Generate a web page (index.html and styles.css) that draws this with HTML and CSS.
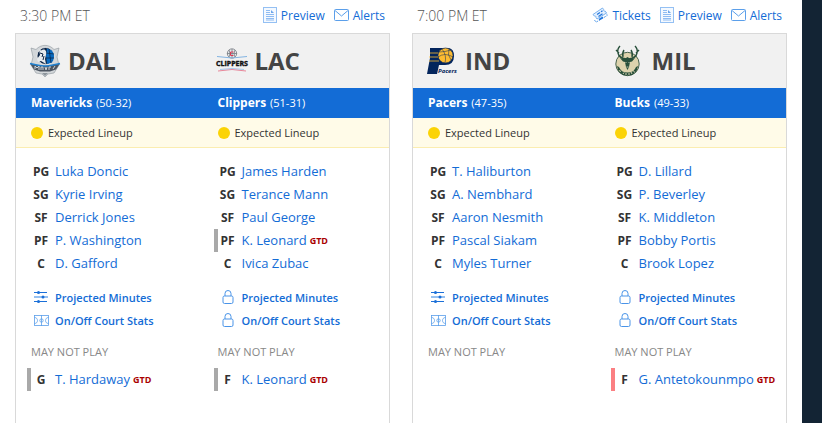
FILE: index.html
```html
<!DOCTYPE html>
<html lang="en">
<head>
    <meta charset="UTF-8">
    <meta name="viewport" content="width=device-width, initial-scale=1.0">
    <title>NBA Lineups</title>
    <link rel="stylesheet" href="styles.css">
</head>
<body>
    <!-- icon set -->
    <svg class="icon-set" aria-hidden="true">
        <symbol id="preview" viewBox="0 0 14 16">
            <rect x="0.5" y="0.5" width="13" height="15" fill="#f4f9ff" stroke="#94c0f3"/>
            <path d="M3 3.5h4M3 5.5h4M3 7.5h8M3 9.5h8M3 11.5h8M3 13h8" stroke="#8fbcf2"/>
            <path d="M8 3l3 3H8z" fill="#6ba6ec"/>
        </symbol>
        <symbol id="mail" viewBox="0 0 15 12">
            <rect x="0.5" y="0.5" width="14" height="11" rx="1" fill="none" stroke="#5b9fea"/>
            <path d="M1 1.5l6.5 5.5L14 1.5" fill="none" stroke="#5b9fea"/>
        </symbol>
        <symbol id="ticket" viewBox="0 0 16 16">
            <path d="M1 7.5L10.5 1l1.2 1.6c-.4 1 .5 1.8 1.5 1.5L14.5 6 5 12 4 10.5c.3-1.2-.8-1.8-1.6-1.4z" fill="#e6f1fe" stroke="#5b9fea" stroke-width="0.8"/>
            <path d="M2.5 13l1.5 2.2L15.2 8.5 14.5 6" fill="none" stroke="#5b9fea" stroke-dasharray="2 1"/>
            <path d="M5 7.5l3-2M9 4.7l1.5-1M6.5 9.5l4-2.7" stroke="#2378de" stroke-width="1.3"/>
            <path d="M7 12.7l4-2.5" stroke="#2378de" stroke-width="1.6"/>
        </symbol>
        <symbol id="sliders" viewBox="0 0 14 13">
            <path d="M0 1.5h13M0 10.5h13" stroke="#1a6fd8"/>
            <path d="M0 6h14" stroke="#7db1ee" stroke-width="1.6"/>
            <circle cx="4.5" cy="1.5" r="1.5" fill="#1a6fd8"/>
            <circle cx="9" cy="6" r="1.5" fill="#1a6fd8"/>
            <circle cx="4.5" cy="10.5" r="1.5" fill="#1a6fd8"/>
        </symbol>
        <symbol id="court" viewBox="0 0 15 11">
            <g fill="none" stroke="#5b9fea" stroke-width="0.8">
                <rect x="0.5" y="0.5" width="14" height="10"/>
                <path d="M7.5 0v11M0.5 2.5c4 0 4 6 0 6M14.5 2.5c-4 0-4 6 0 6"/>
                <circle cx="7.5" cy="5.5" r="1.7"/>
            </g>
        </symbol>
        <symbol id="lock" viewBox="0 0 12 14">
            <rect x="1" y="6" width="10" height="7.5" rx="1.5" fill="none" stroke="#4a94e8"/>
            <path d="M3 6V3.5a3 3 0 0 1 6 0V6" fill="none" stroke="#4a94e8"/>
        </symbol>
    </svg>

    <main class="lineups">
        <section class="game">
            <div class="game-top">
                <span class="game-time">3:30 PM ET</span>
                <nav class="game-links">
                    <a href="#"><svg class="i-preview"><use href="#preview"/></svg>Preview</a>
                    <a href="#"><svg class="i-mail"><use href="#mail"/></svg>Alerts</a>
                </nav>
            </div>
            <div class="card">
                <div class="teams">
                    <h2>
                        <svg class="logo" viewBox="0 0 30 32">
                            <path d="M1 3l5 1.5C11-1 19-1 24 4.5L29 3l-2 9 2 8-5 8-6 1-3 3-3-3-6-1-5-8 2-8z" fill="#d3d7da" stroke="#8c949b" stroke-width="0.6"/>
                            <circle cx="15.5" cy="11" r="8.5" fill="#0b2344" stroke="#f1f1f1" stroke-width="0.8"/>
                            <path d="M17 3.5c7 1 9 8 5 14l-5 1.5-1-8z" fill="#0a6bc0"/>
                            <path d="M16 8l8 1M16 13h8M19 4l2 14" stroke="#0b2344" stroke-width="0.7"/>
                            <path d="M9 4l2 1.5C15 3 17 6 16 10l-1 4 1 5-5-3-3 1-1-3 3-4z" fill="#e7ebee"/>
                            <path d="M10 8l3 1-1 3M13 15l1-4" fill="none" stroke="#0b2344"/>
                            <path d="M0 18.5l7 1.5q8 2 16 0l7-1.5-4 6-6 2H10l-6-2z" fill="#4c5561"/>
                            <path d="M0 18.5l7 1.5q8 2 16 0l7-1.5" fill="none" stroke="#2181cf" stroke-width="1.5"/>
                            <path d="M5 24v-3l2 2 2-2v4M11 25v-3h2v3M15 22l1 3 1-3M19 25v-3h2M23 24l2-3" fill="none" stroke="#cbd2d8"/>
                            <path d="M12 28l3 3 3-3" fill="#8c949b"/>
                        </svg>
                        DAL
                    </h2>
                    <h2>
                        <svg class="logo" viewBox="0 0 30 32">
                            <g fill="none" stroke="#767b82" stroke-width="0.8">
                                <circle cx="15" cy="8.5" r="4.7" fill="#e6e8eb"/>
                                <path d="M10 8.5h10M15 4v9M12 5q2 3.5 0 7M18 5q-2 3.5 0 7"/>
                            </g>
                            <path d="M16.5 7h-3v3.5h3" fill="none" stroke="#d83a55"/>
                            <path d="M0 11.5q15 3 30 0" fill="none" stroke="#83b4e2"/>
                            <text x="15" y="21" text-anchor="middle" class="clippers">CLIPPERS</text>
                            <path d="M1 26q14-3 28 0" fill="none" stroke="#e8879a"/>
                            <path d="M3 24.5q12-2 24 0" fill="none" stroke="#83b4e2" stroke-width="0.7"/>
                        </svg>
                        LAC
                    </h2>
                </div>
                <div class="names">
                    <div><b>Mavericks</b> (50-32)</div>
                    <div><b>Clippers</b> (51-31)</div>
                </div>
                <div class="status">
                    <div>Expected Lineup</div>
                    <div>Expected Lineup</div>
                </div>
                <div class="rosters">
                    <div class="roster">
                        <ul>
                            <li><b>PG</b><a href="#">Luka Doncic</a></li>
                            <li><b>SG</b><a href="#">Kyrie Irving</a></li>
                            <li><b>SF</b><a href="#">Derrick Jones</a></li>
                            <li><b>PF</b><a href="#">P. Washington</a></li>
                            <li><b>C</b><a href="#">D. Gafford</a></li>
                        </ul>
                        <ul class="tools">
                            <li><span><svg class="i-sliders"><use href="#sliders"/></svg></span><a href="#">Projected Minutes</a></li>
                            <li><span><svg class="i-court"><use href="#court"/></svg></span><a href="#">On/Off Court Stats</a></li>
                        </ul>
                        <h3>MAY NOT PLAY</h3>
                        <ul>
                            <li class="maybe"><b>G</b><a href="#">T. Hardaway</a><em>GTD</em></li>
                        </ul>
                    </div>
                    <div class="roster">
                        <ul>
                            <li><b>PG</b><a href="#">James Harden</a></li>
                            <li><b>SG</b><a href="#">Terance Mann</a></li>
                            <li><b>SF</b><a href="#">Paul George</a></li>
                            <li class="maybe"><b>PF</b><a href="#">K. Leonard</a><em>GTD</em></li>
                            <li><b>C</b><a href="#">Ivica Zubac</a></li>
                        </ul>
                        <ul class="tools">
                            <li><span><svg class="i-lock"><use href="#lock"/></svg></span><a href="#">Projected Minutes</a></li>
                            <li><span><svg class="i-lock"><use href="#lock"/></svg></span><a href="#">On/Off Court Stats</a></li>
                        </ul>
                        <h3>MAY NOT PLAY</h3>
                        <ul>
                            <li class="maybe"><b>F</b><a href="#">K. Leonard</a><em>GTD</em></li>
                        </ul>
                    </div>
                </div>
            </div>
        </section>

        <section class="game">
            <div class="game-top">
                <span class="game-time">7:00 PM ET</span>
                <nav class="game-links">
                    <a href="#"><svg class="i-ticket"><use href="#ticket"/></svg>Tickets</a>
                    <a href="#"><svg class="i-preview"><use href="#preview"/></svg>Preview</a>
                    <a href="#"><svg class="i-mail"><use href="#mail"/></svg>Alerts</a>
                </nav>
            </div>
            <div class="card">
                <div class="teams">
                    <h2>
                        <svg class="logo" viewBox="0 0 30 32">
                            <path d="M3 3h19q5 1 5 8 0 9-9 9h-6l-2 9H0L3 13z" fill="#03255c"/>
                            <circle cx="18.5" cy="10.5" r="7.5" fill="#fdbb30" stroke="#03255c" stroke-width="0.6"/>
                            <path d="M11 12q7-5 15 0M12 7q6 0 12-2M15 4q5 6 3 14M22 4q-2 6 2 11" fill="none" stroke="#03255c" stroke-width="0.5"/>
                            <path d="M3 8h8M2 12h9M2 16h10" stroke="#fdbb30" stroke-width="0.8"/>
                            <text x="11" y="28" class="pacers">Pacers</text>
                        </svg>
                        IND
                    </h2>
                    <h2>
                        <svg class="logo" viewBox="0 0 30 32">
                            <circle cx="13.5" cy="19" r="11.7" fill="#ddd3ad" stroke="#48644f"/>
                            <path d="M3 21q1 9.5 10.5 9.500Q23 30.500 24 21l-2 1q-2 5.500-8.500 5.500T5 22z" fill="#28503b"/>
                            <path d="M5.5 25l1 2M9 29l1-1.500M12 30v-2M15 30v-2M18 29l-1-2M20.500 27.500l-1-2" stroke="#d6d0b4"/>
                            <path d="M12 14Q5 13 4 8 3 4 6 1M15 14q7-1 8-6 1-4-2-7M9 12Q8 8 10 5M18 12q1-4-1-7M5 8L2 5M22 8l3-3" fill="none" stroke="#28503b" stroke-width="1.4"/>
                            <path d="M10.5 14l3-2 3 2 4.5-1-3 3.5-2 .5-1 5-1.5 3-1.5-3-1-5-2-.5L6 13z" fill="#28503b"/>
                            <path d="M11.5 17l1 1M15.5 17l-1 1M12.5 22h2" stroke="#f0ead0" stroke-width="0.7"/>
                        </svg>
                        MIL
                    </h2>
                </div>
                <div class="names">
                    <div><b>Pacers</b> (47-35)</div>
                    <div><b>Bucks</b> (49-33)</div>
                </div>
                <div class="status">
                    <div>Expected Lineup</div>
                    <div>Expected Lineup</div>
                </div>
                <div class="rosters">
                    <div class="roster">
                        <ul>
                            <li><b>PG</b><a href="#">T. Haliburton</a></li>
                            <li><b>SG</b><a href="#">A. Nembhard</a></li>
                            <li><b>SF</b><a href="#">Aaron Nesmith</a></li>
                            <li><b>PF</b><a href="#">Pascal Siakam</a></li>
                            <li><b>C</b><a href="#">Myles Turner</a></li>
                        </ul>
                        <ul class="tools">
                            <li><span><svg class="i-sliders"><use href="#sliders"/></svg></span><a href="#">Projected Minutes</a></li>
                            <li><span><svg class="i-court"><use href="#court"/></svg></span><a href="#">On/Off Court Stats</a></li>
                        </ul>
                        <h3>MAY NOT PLAY</h3>
                    </div>
                    <div class="roster">
                        <ul>
                            <li><b>PG</b><a href="#">D. Lillard</a></li>
                            <li><b>SG</b><a href="#">P. Beverley</a></li>
                            <li><b>SF</b><a href="#">K. Middleton</a></li>
                            <li><b>PF</b><a href="#">Bobby Portis</a></li>
                            <li><b>C</b><a href="#">Brook Lopez</a></li>
                        </ul>
                        <ul class="tools">
                            <li><span><svg class="i-lock"><use href="#lock"/></svg></span><a href="#">Projected Minutes</a></li>
                            <li><span><svg class="i-lock"><use href="#lock"/></svg></span><a href="#">On/Off Court Stats</a></li>
                        </ul>
                        <h3>MAY NOT PLAY</h3>
                        <ul>
                            <li class="doubtful"><b>F</b><a href="#">G. Antetokounmpo</a><em>GTD</em></li>
                        </ul>
                    </div>
                </div>
            </div>
        </section>
    </main>
</body>
</html>
```
FILE: styles.css
```css
* {
    box-sizing: border-box;
}
html {
    scrollbar-width: none;
}
body {
    margin: 0;
    padding-right: 20px;
    background: #132434;
    color: #333;
    font-family: "Open Sans", sans-serif;
    font-size: 13px;
}
a {
    color: #136cd6;
    text-decoration: none;
}
a:hover {
    text-decoration: underline;
}
ul, h2, h3 {
    margin: 0;
    padding: 0;
    list-style: none;
}
.icon-set {
    display: none;
}
.lineups {
    display: grid;
    grid-template-columns: 1fr 1fr;
    gap: 22px;
    padding: 0 15px 20px;
    background: #fff;
}

/* time and links over each card */
.game-top {
    display: flex;
    justify-content: space-between;
    align-items: center;
    height: 33px;
    padding: 0 5px 3px;
}
.game-time {
    color: #555;
    font-size: 14px;
    font-weight: 300;
}
.game-links {
    display: flex;
    gap: 9px;
    font-size: 12px;
}
.game-links a {
    display: flex;
    align-items: center;
    gap: 4px;
}
.i-preview {
    width: 14px;
    height: 16px;
}
.i-mail {
    width: 15px;
    height: 12px;
}
.i-ticket {
    width: 16px;
    height: 16px;
}
.i-sliders {
    width: 14px;
    height: 13px;
}
.i-court {
    width: 15px;
    height: 11px;
}
.i-lock {
    width: 12px;
    height: 14px;
}

.card {
    border: 1px solid #d9d9d9;
}
.teams, .names, .status, .rosters {
    display: grid;
    grid-template-columns: 1fr 1fr;
}
.teams {
    height: 54px;
    background: #f1f1f1;
}
.teams h2 {
    display: flex;
    align-items: center;
    gap: 8px;
    padding-left: 14px;
    color: #444;
    font-size: 24px;
    line-height: 32px;
}
.logo {
    width: 30px;
    height: 32px;
    overflow: visible;
}
.clippers {
    fill: #111;
    stroke: #111;
    stroke-width: 0.4;
    font: bold 7px "Open Sans", sans-serif;
}
.pacers {
    fill: #03255c;
    font: italic bold 6px "Open Sans", sans-serif;
}
.names {
    background: #136cd6;
    color: #fff;
    font-size: 11px;
    line-height: 30px;
}
.names div {
    padding-left: 15px;
}
.names b {
    margin-right: 1px;
    font-size: 12px;
}
.status {
    background: #fffbe8;
    border-bottom: 1px solid #fbedb0;
    font-size: 11px;
    line-height: 29px;
}
.status div {
    display: flex;
    align-items: center;
    gap: 5px;
    padding-left: 15px;
}
.status div::before {
    content: "";
    width: 12px;
    height: 12px;
    border-radius: 50%;
    background: #fbd305;
}

.roster {
    padding: 12px 0 48px 11px;
}
.roster li {
    display: flex;
    align-items: center;
    height: 23px;
    padding-bottom: 1px;
    border-left: 4px solid transparent;
    white-space: nowrap;
}
.roster li.maybe {
    border-color: #a9a9a9;
}
.roster li.doubtful {
    border-color: #fb7f82;
}
.roster b, .roster span {
    display: flex;
    justify-content: center;
    width: 20px;
    margin-right: 4px;
    font-size: 12px;
}
.roster em {
    margin-left: 3px;
    color: #a90000;
    font-size: 9px;
    font-style: normal;
    font-weight: bold;
}
.roster .tools {
    margin: 11px 0 10px;
    font-size: 11px;
    font-weight: 600;
}
.roster h3 {
    margin-bottom: 7px;
    padding-left: 4px;
    color: #888;
    font-size: 11px;
    font-weight: 400;
    line-height: 19px;
}
```
